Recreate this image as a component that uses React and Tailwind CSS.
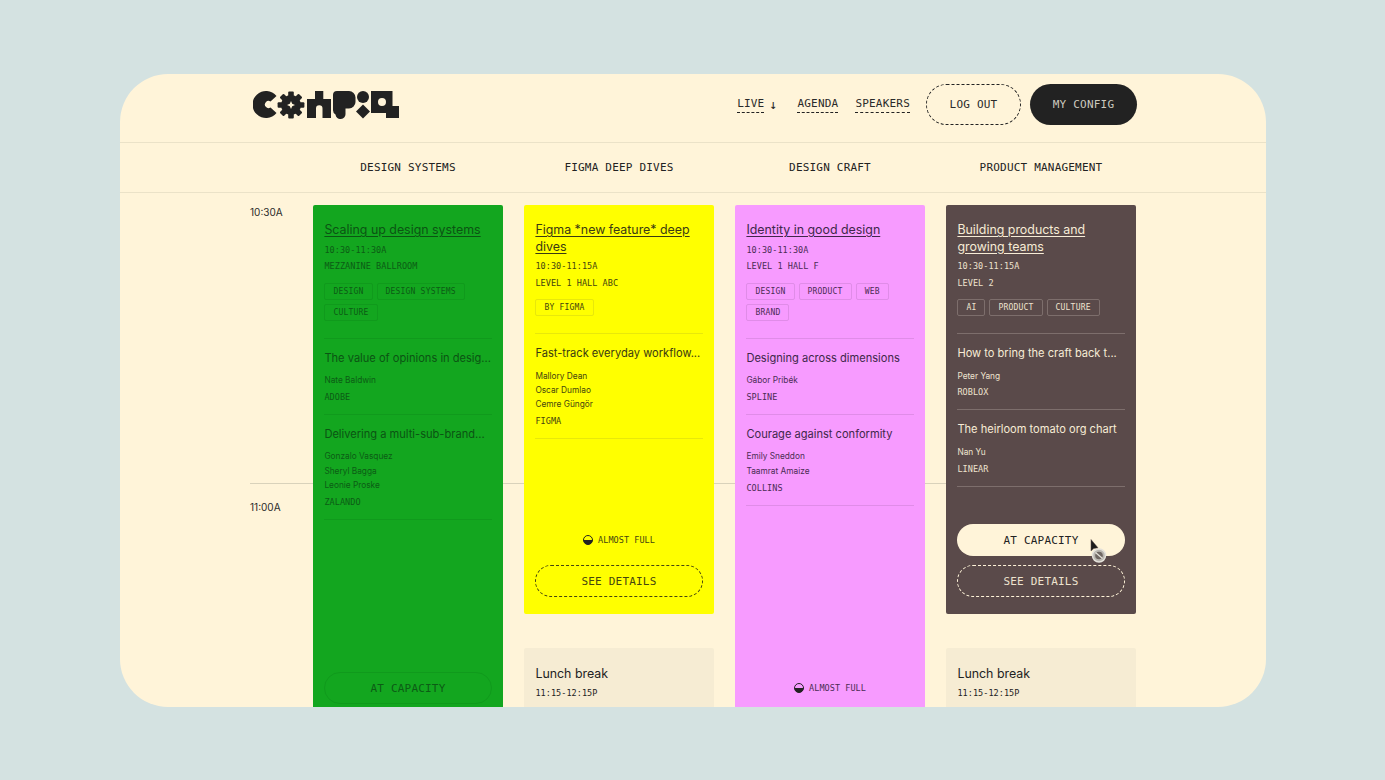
const mono = "font-['DejaVu_Sans_Mono',monospace]";

const themes = {
  green: { card: "bg-[#13a61f]", text: "text-[#0c5c15]", title: "text-[#0b5413]", line: "border-[#109a1c]", tag: "border-[#109a1c]", dash: "border-[#0c5c15]", solid: "border border-[#109a1c] text-[#0c5c15] leading-[31px]" },
  yellow: { card: "bg-[#ffff00]", text: "text-[#45450f]", title: "text-[#3a3a12]", line: "border-[#e8e80a]", tag: "border-[#e8e80a]", dash: "border-[#45450f]", solid: "" },
  pink: { card: "bg-[#f79bff]", text: "text-[#4b2c54]", title: "text-[#40274a]", line: "border-[#e08ce8]", tag: "border-[#e08ce8]", dash: "border-[#4b2c54]", solid: "" },
  brown: { card: "bg-[#5a4a4a]", text: "text-[#eee3cf]", title: "text-[#f7ecd6]", line: "border-[#7d6e6c]", tag: "border-[#7d6e6c]", dash: "border-[#fff4d9]", solid: "bg-[#fff4d9] text-[#222222] leading-[33px]" },
};

const tracks = [
  {
    name: "DESIGN SYSTEMS",
    theme: "green",
    title: "Scaling up design systems",
    time: "10:30-11:30A",
    place: "MEZZANINE BALLROOM",
    tags: ["DESIGN", "DESIGN SYSTEMS", "CULTURE"],
    talks: [
      { title: "The value of opinions in desig...", people: ["Nate Baldwin"], org: "ADOBE" },
      { title: "Delivering a multi-sub-brand...", people: ["Gonzalo Vasquez", "Sheryl Bagga", "Leonie Proske"], org: "ZALANDO" },
    ],
    tall: true,
    status: "capacity",
  },
  {
    name: "FIGMA DEEP DIVES",
    theme: "yellow",
    title: "Figma *new feature* deep dives",
    time: "10:30-11:15A",
    place: "LEVEL 1 HALL ABC",
    tags: ["BY FIGMA"],
    talks: [
      { title: "Fast-track everyday workflow...", people: ["Mallory Dean", "Oscar Dumlao", "Cemre Güngör"], org: "FIGMA" },
    ],
    status: "almost",
    lunch: true,
  },
  {
    name: "DESIGN CRAFT",
    theme: "pink",
    title: "Identity in good design",
    time: "10:30-11:30A",
    place: "LEVEL 1 HALL F",
    tags: ["DESIGN", "PRODUCT", "WEB", "BRAND"],
    talks: [
      { title: "Designing across dimensions", people: ["Gábor Pribék"], org: "SPLINE" },
      { title: "Courage against conformity", people: ["Emily Sneddon", "Taamrat Amaize"], org: "COLLINS" },
    ],
    tall: true,
    status: "almost",
  },
  {
    name: "PRODUCT MANAGEMENT",
    theme: "brown",
    title: "Building products and growing teams",
    time: "10:30-11:15A",
    place: "LEVEL 2",
    tags: ["AI", "PRODUCT", "CULTURE"],
    talks: [
      { title: "How to bring the craft back t...", people: ["Peter Yang"], org: "ROBLOX" },
      { title: "The heirloom tomato org chart", people: ["Nan Yu"], org: "LINEAR" },
    ],
    status: "capacity",
    cursor: true,
    lunch: true,
  },
];

function Logo() {
  const teeth = [0, 45, 90, 135, 180, 225, 270, 315];
  return (
    <svg width="146" height="28" viewBox="0 0 146 28" className="block" fill="#222222">
      <path d="M23.5 5A13.5 13.5 0 1 0 23.5 22L17.5 16.5A3.600 3.600 0 1 1 17.5 10.5Z" />
      <g transform="translate(38 14)">
        <circle r="10" />
        {teeth.map((a) => (
          <rect key={a} x="-2.800" y="-13.400" width="5.600" height="7" rx="1" transform={`rotate(${a})`} />
        ))}
        <path d="M0-4 1.200-1.200 4 0 1.200 1.200 0 4-1.200 1.200-4 0-1.200-1.200Z" fill="#fff4d9" />
      </g>
      <path d="M62 0H70.300V8H78V27H69.500V17.500A3 3 0 0 0 63 17.500V27H54V8H62Z" />
      <path d="M84 0H96A6.500 6.500 0 0 1 102.500 6.500V11A6.500 6.500 0 0 1 96 17.500H92.500V22.500A5 5 0 0 1 82.500 23.500 5 5 0 0 1 80 19V4A4 4 0 0 1 84 0Z" />
      <circle cx="110" cy="6" r="6" />
      <path d="M110 13.500 117 20.500 110 27.500 103 20.500Z" />
      <path fillRule="evenodd" d="M118 0H139.500V15H146V27H133V22H118ZM129 7A4 4 0 1 0 129 15 4 4 0 1 0 129 7Z" />
    </svg>
  );
}

function NavLink({ children }) {
  return <a className="border-b border-dashed border-[#222222] leading-[14px] pb-px">{children}</a>;
}

function HalfCircle() {
  return (
    <svg width="10" height="10" viewBox="0 0 10 10">
      <circle cx="5" cy="5" r="4.500" fill="none" stroke="#222222" strokeWidth="1" />
      <path d="M0.500 5H9.500A4.500 4.500 0 0 1 0.500 5Z" fill="#222222" />
    </svg>
  );
}

function Cursor() {
  return (
    <svg width="18" height="26" viewBox="0 0 18 26" className="absolute left-[133px] top-[15px]">
      <circle cx="9" cy="16.500" r="6.500" fill="#b9b6b0" stroke="#e4e1da" strokeWidth="1.500" />
      <circle cx="9" cy="16.500" r="3.800" fill="#6f6763" />
      <path d="M5.500 13.500 12.500 19.500" stroke="#e4e1da" strokeWidth="1.300" />
      <path d="M1 0.500V12L3.700 9.600 8 8.800Z" fill="#1c1c1c" stroke="#5a4a4a" strokeWidth="0.500" />
    </svg>
  );
}

function Talk({ talk, t }) {
  return (
    <div className={`border-b ${t.line} pt-[11px] pb-[11px]`}>
      <div className={`text-[11.100px] leading-[16px] whitespace-nowrap ${t.title}`}>{talk.title}</div>
      <div className="mt-[7.500px] text-[8.300px] leading-[14.400px]">
        {talk.people.map((p) => (
          <div key={p}>{p}</div>
        ))}
      </div>
      <div className={`${mono} mt-[3.500px] text-[8.500px] leading-[12px] tracking-[0.05px]`}>{talk.org}</div>
    </div>
  );
}

function Card({ track }) {
  const t = themes[track.theme];
  return (
    <div className={`${t.card} ${t.text} ${track.tall ? "h-[557px]" : "h-[409px]"} rounded-[2px] pl-[11.400px] pr-[11.400px] pt-[17px] pb-[17px] flex flex-col`}>
      <div className={`text-[12.400px] leading-[16.500px] underline underline-offset-2 ${t.title}`}>{track.title}</div>
      <div className={`${mono} mt-[5px] text-[8.500px] leading-[12px] tracking-[0.05px]`}>{track.time}</div>
      <div className={`${mono} mt-[4.500px] text-[8.500px] leading-[12px] tracking-[0.05px]`}>{track.place}</div>
      <div className={`border-b ${t.line} mt-[10.500px] pb-[17px] flex flex-wrap gap-x-[4px] gap-y-[4px]`}>
        {track.tags.map((tag) => (
          <span key={tag} className={`${mono} border ${t.tag} rounded-[2px] h-[17px] px-[8px] text-[8px] leading-[15px] tracking-[0.2px]`}>
            {tag}
          </span>
        ))}
      </div>
      {track.talks.map((talk) => (
        <Talk key={talk.title} talk={talk} t={t} />
      ))}
      <div className="mt-auto flex flex-col">
        {track.status === "capacity" ? (
          <div className={`${mono} ${t.solid} relative rounded-full h-[32px] text-center text-[11px] tracking-[0.2px]`}>
            AT CAPACITY
            {track.cursor && <Cursor />}
          </div>
        ) : (
          <div className={`${mono} mb-[19px] flex items-center justify-center gap-[5px] h-[12px] text-[8.500px] tracking-[0.05px]`}>
            <HalfCircle />
            ALMOST FULL
          </div>
        )}
        <div className={`${mono} border border-dashed ${t.dash} ${track.status === "capacity" ? "mt-[9px]" : ""} rounded-full h-[32px] text-center text-[11px] leading-[31px] tracking-[0.2px]`}>
          SEE DETAILS
        </div>
      </div>
    </div>
  );
}

function Lunch() {
  return (
    <div className="mt-[34px] h-[100px] rounded-[2px] bg-[#f6ecd3] px-[11.400px] pt-[18px] text-[#222222]">
      <div className="text-[12.400px] leading-[16px]">Lunch break</div>
      <div className={`${mono} mt-[5px] text-[8.500px] leading-[12px] tracking-[0.05px]`}>11:15-12:15P</div>
    </div>
  );
}

export default function App() {
  return (
    <div className="h-[780px] w-[1385px] overflow-hidden bg-[#d4e2e1] pl-[120px] pt-[74px] font-['Inter',sans-serif] text-[#222222]">
      <div className="h-[633px] w-[1146px] overflow-hidden rounded-[48px] bg-[#fff4d9]">
        <header className="h-[69px] border-b border-[#ebe2c8] pl-[133px] pr-[129px] flex items-start justify-between">
          <div className="pt-[17px]">
            <Logo />
          </div>
          <nav className={`${mono} pt-[10px] flex items-center text-[11px] tracking-[0.2px] text-[#2a2a2a]`}>
            <NavLink>LIVE</NavLink>
            <span className="ml-[5px] mr-[20px] text-[13px] leading-[14px]">↓</span>
            <NavLink>AGENDA</NavLink>
            <span className="w-[17px]" />
            <NavLink>SPEAKERS</NavLink>
            <a className="ml-[16px] h-[41px] w-[95px] rounded-full border border-dashed border-[#222222] text-center leading-[39px]">LOG OUT</a>
            <a className="ml-[9px] h-[41px] w-[107px] rounded-full bg-[#222222] text-center leading-[41px] text-[#cdc9be]">MY CONFIG</a>
          </nav>
        </header>

        <div className="h-[50px] border-b border-[#ebe2c8] pl-[130px]">
          <div className="grid grid-cols-[42px_repeat(4,190px)] gap-x-[21px]">
            <div />
            {tracks.map((track) => (
              <div key={track.name} className={`${mono} text-center text-[11px] leading-[49px] tracking-[0.2px]`}>
                {track.name}
              </div>
            ))}
          </div>
        </div>

        <div className="pl-[130px] pt-[12px]">
          <div className="grid w-[887px] grid-cols-[42px_repeat(4,190px)] gap-x-[21px] items-start">
            <div className="col-span-full row-start-1 text-[10px] leading-[14px] text-[#2a2a2a]">
              <div className="h-[279px] border-b border-[#d9d2bb]">10:30A</div>
              <div className="pt-[16px]">11:00A</div>
            </div>
            {tracks.map((track, i) => (
              <div key={track.name} className={`row-start-1 ${["col-start-2", "col-start-3", "col-start-4", "col-start-5"][i]}`}>
                <Card track={track} />
                {track.lunch && <Lunch />}
              </div>
            ))}
          </div>
        </div>
      </div>
    </div>
  );
}
